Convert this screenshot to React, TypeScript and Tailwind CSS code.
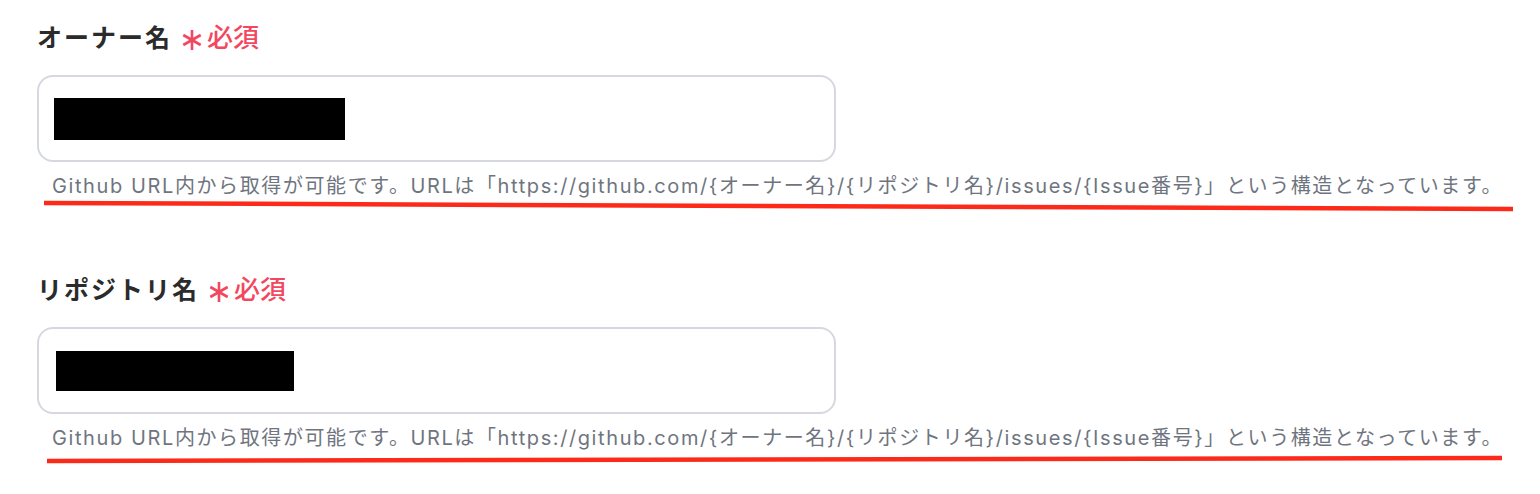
import React from "react";

const HELP =
  "Github URL内から取得が可能です。URLは「https://github.com/{オーナー名}/{リポジトリ名}/issues/{Issue番号}」という構造となっています。";

function Asterisk() {
  return (
    <svg width="20" height="22" viewBox="0 0 20 22" className="ml-[10px] mt-[4px] shrink-0">
      <g stroke="#f2475f" strokeWidth="2.6" strokeLinecap="butt">
        <line x1="10" y1="1" x2="10" y2="21" />
        <line x1="1.3" y1="6" x2="18.7" y2="16" />
        <line x1="1.3" y1="16" x2="18.7" y2="6" />
      </g>
    </svg>
  );
}

function Field({
  label,
  boxW,
  boxH,
  boxL,
  line,
}: {
  label: string;
  boxW: number;
  boxH: number;
  boxL: number;
  line: string;
}) {
  return (
    <div className="flex flex-col">
      <div className="flex items-center h-[36px]">
        <span className="text-[25px] leading-[36px] font-bold text-[#2b2b2b] tracking-[2px]">
          {label}
        </span>
        <Asterisk />
        <span className="ml-[5px] text-[26px] leading-[36px] font-medium text-[#f2475f]">必須</span>
      </div>
      <div className="mt-[19px] w-[799px] h-[87px] rounded-[16px] border-2 border-[#d5d9df] bg-white flex items-center">
        <div style={{ width: boxW, height: boxH, marginLeft: boxL }} className="bg-black" />
      </div>
      <p className="mt-[10px] pl-[15px] text-[20px] leading-[28px] text-[#6f7580] whitespace-nowrap tracking-[1.6px]">
        {HELP}
      </p>
      <svg width="1540" height="14" className="block -ml-[37px]">
        <path d={line} stroke="#fd2a1a" strokeWidth="4.5" fill="none" strokeLinecap="butt" />
      </svg>
    </div>
  );
}

export default function App() {
  return (
    <div
      className="w-[1540px] h-[494px] bg-white pl-[37px] pt-[20px] overflow-hidden"
      style={{ fontFamily: "Inter, 'Noto Sans CJK JP', sans-serif" }}
    >
      <Field
        label="オーナー名"
        boxW={291}
        boxH={42}
        boxL={15}
        line="M44 3 Q 700 5 1513 9"
      />
      <div className="mt-[58px]">
        <Field
          label="リポジトリ名"
          boxW={238}
          boxH={40}
          boxL={17}
          line="M47 9 Q 700 9 1502 6"
        />
      </div>
    </div>
  );
}
